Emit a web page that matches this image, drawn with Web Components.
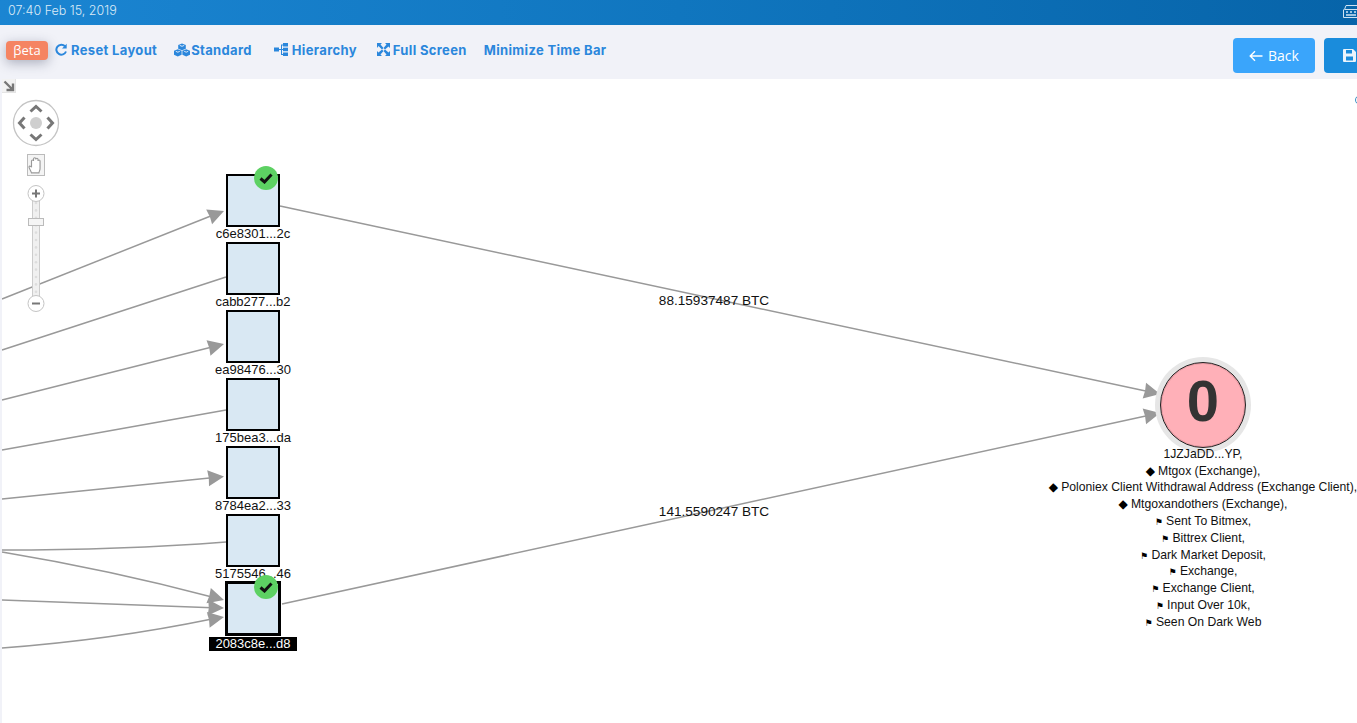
<!DOCTYPE html>
<html><head><meta charset="utf-8"><style>
html,body{margin:0;padding:0;height:100%;overflow:hidden;background:#fff}
app-shell{font-family:"Liberation Sans",Arial,sans-serif}
</style></head><body>
<app-shell>
  <top-bar slot="top">07:40 Feb 15, 2019</top-bar>
  <tool-bar slot="tools">
    <beta-badge>βeta</beta-badge>
    <tool-link icon="reset" gap="4" ml="7">Reset Layout</tool-link>
    <tool-link icon="cubes" gap="0" ml="16">Standard</tool-link>
    <tool-link icon="tree" gap="4" ml="22">Hierarchy</tool-link>
    <tool-link icon="full" gap="3" ml="20">Full Screen</tool-link>
    <tool-link gap="0" ml="17">Minimize Time Bar</tool-link>
    <action-button slot="actions" icon="back" tone="light">Back</action-button>
    <action-button slot="actions" icon="save" tone="dark"></action-button>
  </tool-bar>
  <graph-canvas slot="canvas">
    <nav-control></nav-control>
    <tx-node x="226" y="95" label="c6e8301...2c" checked></tx-node>
    <tx-node x="226" y="163" label="cabb277...b2"></tx-node>
    <tx-node x="226" y="231" label="ea98476...30"></tx-node>
    <tx-node x="226" y="299" label="175bea3...da"></tx-node>
    <tx-node x="226" y="367" label="8784ea2...33"></tx-node>
    <tx-node x="226" y="435" label="5175546...46"></tx-node>
    <tx-node x="226" y="503" label="2083c8e...d8" selected checked></tx-node>
    <edge-label x="714" y="222">88.15937487 BTC</edge-label>
    <edge-label x="714" y="433">141.5590247 BTC</edge-label>
    <address-node x="1203" y="326">
      <div>1JZJaDD...YP,</div>
      <div><tag-mark>◆</tag-mark> Mtgox (Exchange),</div>
      <div><tag-mark>◆</tag-mark> Poloniex Client Withdrawal Address (Exchange Client),</div>
      <div><tag-mark>◆</tag-mark> Mtgoxandothers (Exchange),</div>
      <div><tag-mark flag>⚑</tag-mark> Sent To Bitmex,</div>
      <div><tag-mark flag>⚑</tag-mark> Bittrex Client,</div>
      <div><tag-mark flag>⚑</tag-mark> Dark Market Deposit,</div>
      <div><tag-mark flag>⚑</tag-mark> Exchange,</div>
      <div><tag-mark flag>⚑</tag-mark> Exchange Client,</div>
      <div><tag-mark flag>⚑</tag-mark> Input Over 10k,</div>
      <div><tag-mark flag>⚑</tag-mark> Seen On Dark Web</div>
    </address-node>
  </graph-canvas>
</app-shell>
<script>
const def=(name,html)=>{customElements.define(name,class extends HTMLElement{
  constructor(){super();this.attachShadow({mode:'open'});}
  connectedCallback(){this.shadowRoot.innerHTML=typeof html==='function'?html(this):html;}
});};
def('app-shell',`<style>:host{display:flex;flex-direction:column;width:1357px;height:723px;overflow:hidden;position:relative}</style>
<slot name="top"></slot><slot name="tools"></slot><slot name="canvas"></slot>`);
def('top-bar',`<style>:host{display:flex;align-items:center;flex:none;height:25px;box-sizing:border-box;padding:0 0 5px 8px;background:linear-gradient(90deg,#1b85d2,#1076bf 50%,#0764a9);color:#dcebf7;font:300 12.500px Inter,"Liberation Sans",sans-serif;position:relative}
svg{position:absolute;left:1343px;top:5px}</style><slot></slot>
<svg width="16" height="14" viewBox="0 0 16 14" fill="none" stroke="#cfe3f3" stroke-width="1"><path d="M3 .5h13M1.500 4.500h14.500M.5 4.500v8h15.500"/><path d="M3 .5L1.500 4.500"/><path d="M3 7h2M7 7h2M11 7h2M3 10h10" stroke-width="1.500"/></svg>`);
def('tool-bar',`<style>:host{display:flex;align-items:center;flex:none;height:54px;box-sizing:border-box;padding:0 0 0 6px;background:#f1f2f8;position:relative;overflow:hidden}
.a{display:flex;gap:9px;position:absolute;left:1233px;top:13px;width:140px}
.l{display:flex;align-items:center;margin-top:-3px}</style><div class="l"><slot></slot></div><div class="a"><slot name="actions"></slot></div>`);
def('beta-badge',`<style>:host{display:block;width:42px;height:19px;text-align:center;border-radius:4px;background:#f58462;color:#fff;font:13px/19px "Open Sans","Liberation Sans",sans-serif;box-shadow:0 3px 12px rgba(40,50,80,.35)}</style><slot></slot>`);
const icons={
 reset:`<svg width="12" height="13" viewBox="0 0 12 13"><path d="M10 3.200A5 5 0 1 0 11 8.500" fill="none" stroke="#2b87dc" stroke-width="2"/><path d="M11.700.8v4.700H7z" fill="#2b87dc"/></svg>`,
 cubes:`<svg width="18" height="14" viewBox="0 0 18 14" fill="#2b87dc"><path d="M9 .5l3.800 1.600v3.700L9 7.300 5.200 5.800V2.100z"/><path d="M4.800 6.300l3.800 1.500v3.900l-3.800 1.700L1 11.700V7.800z"/><path d="M13.200 6.300l3.800 1.500v3.900l-3.800 1.700-3.800-1.700V7.800z"/><path d="M6.800 2.400L9 3.300l2.200-.9M2.800 8.300l2 .9 2-.9M11.200 8.300l2 .9 2-.9" fill="none" stroke="#f1f2f8" stroke-width=".9"/></svg>`,
 tree:`<svg width="14" height="13" viewBox="0 0 14 13" fill="#2b87dc"><rect x="0" y="4.500" width="5" height="4"/><rect x="9" y="0" width="5" height="3.500"/><rect x="9" y="4.700" width="5" height="3.500"/><rect x="9" y="9.500" width="5" height="3.500"/><path d="M5 6h2V1.500h2v1H8V6h1v1H8v4h1v1H7V7H5z"/></svg>`,
 full:`<svg width="13" height="13" viewBox="0 0 13 13" fill="#2b87dc"><path d="M0 0h5L3.500 1.500 6.500 5 5 6.500 1.500 3 0 5zM13 0v5l-1.500-1.500L8 6.500 6.500 5l3-3.500L8 0zM0 13V8l1.500 1.500L5 6.500 6.500 8l-3 3.500L5 13zM13 13H8l1.500-1.500L6.500 8 8 6.500l3.500 3L13 8z"/></svg>`,
 back:`<svg width="14" height="12" viewBox="0 0 14 12" fill="none" stroke="#fff" stroke-width="1.400"><path d="M13.500 6H1.500M6 1.200L1.200 6 6 10.800"/></svg>`,
 save:`<svg width="13" height="13" viewBox="0 0 13 13"><path d="M0 1a1 1 0 0 1 1-1h9l3 3v9a1 1 0 0 1-1 1H1a1 1 0 0 1-1-1z" fill="#eaf4fc"/><rect x="3" y="1" width="6" height="3.500" fill="#1a8cdc"/><rect x="3" y="7.500" width="7" height="4" fill="#1a8cdc"/></svg>`
};
def('tool-link',h=>`<style>:host{display:inline-flex;align-items:center;gap:${h.getAttribute('gap')||0}px;margin:0 0 2px ${h.getAttribute('ml')||0}px;color:#2b87dc;font:700 13px Inter,"Liberation Sans",sans-serif;letter-spacing:.34px;white-space:nowrap}svg{display:block}</style>${icons[h.getAttribute('icon')]||''}<span><slot></slot></span>`);
def('action-button',h=>{const d=h.getAttribute('tone')==='dark';return `<style>:host{display:flex;flex:none;align-items:center;justify-content:${d?'flex-start':'center'};gap:5px;box-sizing:border-box;width:${d?60:82}px;height:35px;padding-left:${d?19:0}px;border-radius:4px;color:#fff;background:${d?'#1a8cdc':'#3aa5fb'};font:14px "Open Sans","Liberation Sans",sans-serif}</style>${icons[h.getAttribute('icon')]||''}<slot></slot>`});
const heads=[[224,211,-21.6],[224,344,-14.2],[224,476.500,-6.5],[224,600,16],[224,608,2],[224,617,-10],[1160,394,12.2],[1160,413,-12.3]];
def('graph-canvas',`<style>:host{display:block;flex:1;position:relative;background:#fff;overflow:hidden;font:13px/15px "Liberation Sans",Arial,sans-serif;color:#111}
.strip{position:absolute;left:0;top:0;bottom:0;width:2px;background:#f1f2f8}
svg.e{position:absolute;left:0;top:0}
.corner{position:absolute;left:2px;top:0;width:14px;height:14px;background:#f2f2f2;border-right:1px solid #e4e4e4;border-bottom:1px solid #e4e4e4;box-sizing:border-box}
.corner svg{display:block}
.edge-dot{position:absolute;left:1355px;top:16px;width:10px;height:10px;border-radius:50%;box-sizing:border-box;border:1.500px solid #3b8fc4;background:#fff}
</style>
<svg class="e" width="1357" height="644" viewBox="0 79 1357 644" fill="none" stroke="#999" stroke-width="1.500">
<path d="M2 299L212 215.500"/><path d="M2 350L226 277"/><path d="M2 400L212 347"/><path d="M2 450L226 410"/><path d="M2 499L212 477.800"/>
<path d="M2 550Q120 550 226 542"/><path d="M2 552Q110 570 212 597"/><path d="M2 600L212 607.700"/><path d="M2 648Q110 640 212 619"/>
<path d="M280 206L1148 391.500"/><path d="M282 604L1148 415.500"/>
<g fill="#999" stroke="none">${heads.map(([x,y,a])=>`<path transform="translate(${x} ${y}) rotate(${a})" d="M0 0L-16 -8Q-14.500 0 -16 8Z"/>`).join('')}</g></svg>
<div class="strip"></div>
<div class="corner"><svg width="13" height="13" viewBox="0 0 13 13"><path d="M2.500 2.500l7.500 7.500M11 4.500v6.500H4.500" fill="none" stroke="#777" stroke-width="2.400"/></svg></div>
<div class="edge-dot"></div>
<slot></slot>`);
def('nav-control',`<style>:host{position:absolute;left:12px;top:20px;width:48px;height:216px;display:flex;flex-direction:column;align-items:center}
.pad{display:block}.hand{margin-top:7px;width:18px;height:22px;border:1px solid #bbb;box-sizing:border-box;display:flex;align-items:center;justify-content:center;background:#f4f4f4}
.zoom{margin-top:9px;display:block}</style>
<svg class="pad" width="48" height="48" viewBox="0 0 48 48" fill="none"><circle cx="24" cy="24" r="22.500" fill="#fff" stroke="#c4c4c4" stroke-width="1.300"/><circle cx="24" cy="24" r="6" fill="#cfcfcf"/>
<g stroke="#777" stroke-width="3"><path d="M18.500 12.500l5.500-5 5.500 5M18.500 35.500l5.500 5 5.500-5M12.500 18.500l-5 5.500 5 5.500M35.500 18.500l5 5.500-5 5.500"/></g></svg>
<div class="hand"><svg width="16" height="18" viewBox="0 0 14 16" fill="#fff" stroke="#999" stroke-width="1"><path d="M3 15C2 12 .5 10.500 .8 9.500c.4-1 1.700-.4 2.200.6V4.500c0-1.300 1.800-1.300 1.800 0V2.500c0-1.300 2-1.300 2 0V3c0-1.300 2-1.300 2 0v1.500c0-1.300 1.800-1.300 1.800 0V11c0 2-1 3-1 4z"/></svg></div>
<svg class="zoom" width="20" height="128" viewBox="0 0 20 128"><rect x="6.500" y="8" width="7" height="110" fill="#f0f0f0" stroke="#ccc"/>
<g fill="#ddd">${Array.from({length:14},(_,i)=>`<circle cx="10" cy="${18+i*7.400}" r="1.300"/>`).join('')}</g>
<rect x="2.500" y="33.500" width="15" height="7" fill="#f5f5f5" stroke="#bbb"/>
<circle cx="10" cy="8.500" r="8" fill="#fff" stroke="#c4c4c4"/><path d="M6 8.500h8M10 4.500v8" stroke="#777" stroke-width="2"/>
<circle cx="10" cy="118.500" r="8" fill="#fff" stroke="#c4c4c4"/><path d="M6 118.500h8" stroke="#777" stroke-width="2"/></svg>`);
def('tx-node',h=>{const sel=h.hasAttribute('selected');return `<style>:host{position:absolute;left:${h.getAttribute('x')}px;top:${h.getAttribute('y')}px;width:54px;height:53px}
.box{box-sizing:border-box;position:absolute;inset:${sel?'-1px':'0'};background:#d9e8f3;border:${sel?3:2}px solid #000}
.lab{position:absolute;left:-40px;width:134px;top:${sel?'54px':'52px'};text-align:center;white-space:nowrap;line-height:15px}
.lab span{${sel?'display:inline-block;width:88px;height:14px;line-height:14px;background:#000;color:#fff;':''}}
.chk{position:absolute;left:28px;top:${sel?-7:-8}px;width:24px;height:24px;border-radius:50%;background:#5dd163;display:flex;align-items:center;justify-content:center}</style>
<div class="box"></div><div class="lab"><span>${h.getAttribute('label')}</span></div>
${h.hasAttribute('checked')?`<div class="chk"><svg width="14" height="11" viewBox="0 0 14 11" fill="none" stroke="#111" stroke-width="3"><path d="M1.500 5.500l4 3.500 7-7.500"/></svg></div>`:''}`});
def('edge-label',h=>`<style>:host{position:absolute;left:${h.getAttribute('x')}px;top:${h.getAttribute('y')}px;transform:translate(-50%,-50%);white-space:nowrap;font-size:13.600px;line-height:16px;color:#111}</style><slot></slot>`);
def('tag-mark',h=>`<style>:host{display:inline-block;text-align:center;font-style:normal;font-family:"DejaVu Sans",sans-serif;line-height:10px;width:${h.hasAttribute('flag')?7:8}px;font-size:${h.hasAttribute('flag')?9:12}px;overflow:visible;margin-right:1px;color:#000}</style><slot></slot>`);
def('address-node',h=>`<style>:host{position:absolute;left:${h.getAttribute('x')}px;top:${h.getAttribute('y')}px;width:0;height:0;display:block}
.halo{position:absolute;left:-48px;top:-48px;width:96px;height:96px;border-radius:50%;background:#e6e6e6;display:flex;align-items:center;justify-content:center}
.c{box-sizing:border-box;width:86px;height:86px;border-radius:50%;background:#ffb0b8;border:1px solid #222;box-shadow:inset 0 0 0 1px #e79aa3;color:#333;font:700 58px/76px "Liberation Sans",Arial,sans-serif;text-align:center}
.t{position:absolute;left:-200px;width:400px;top:40.800px;text-align:center;white-space:nowrap;font-size:12.200px;line-height:16.800px}
</style>
<div class="halo"><div class="c">0</div></div><div class="t"><slot></slot></div>`);
</script>
</body></html>
